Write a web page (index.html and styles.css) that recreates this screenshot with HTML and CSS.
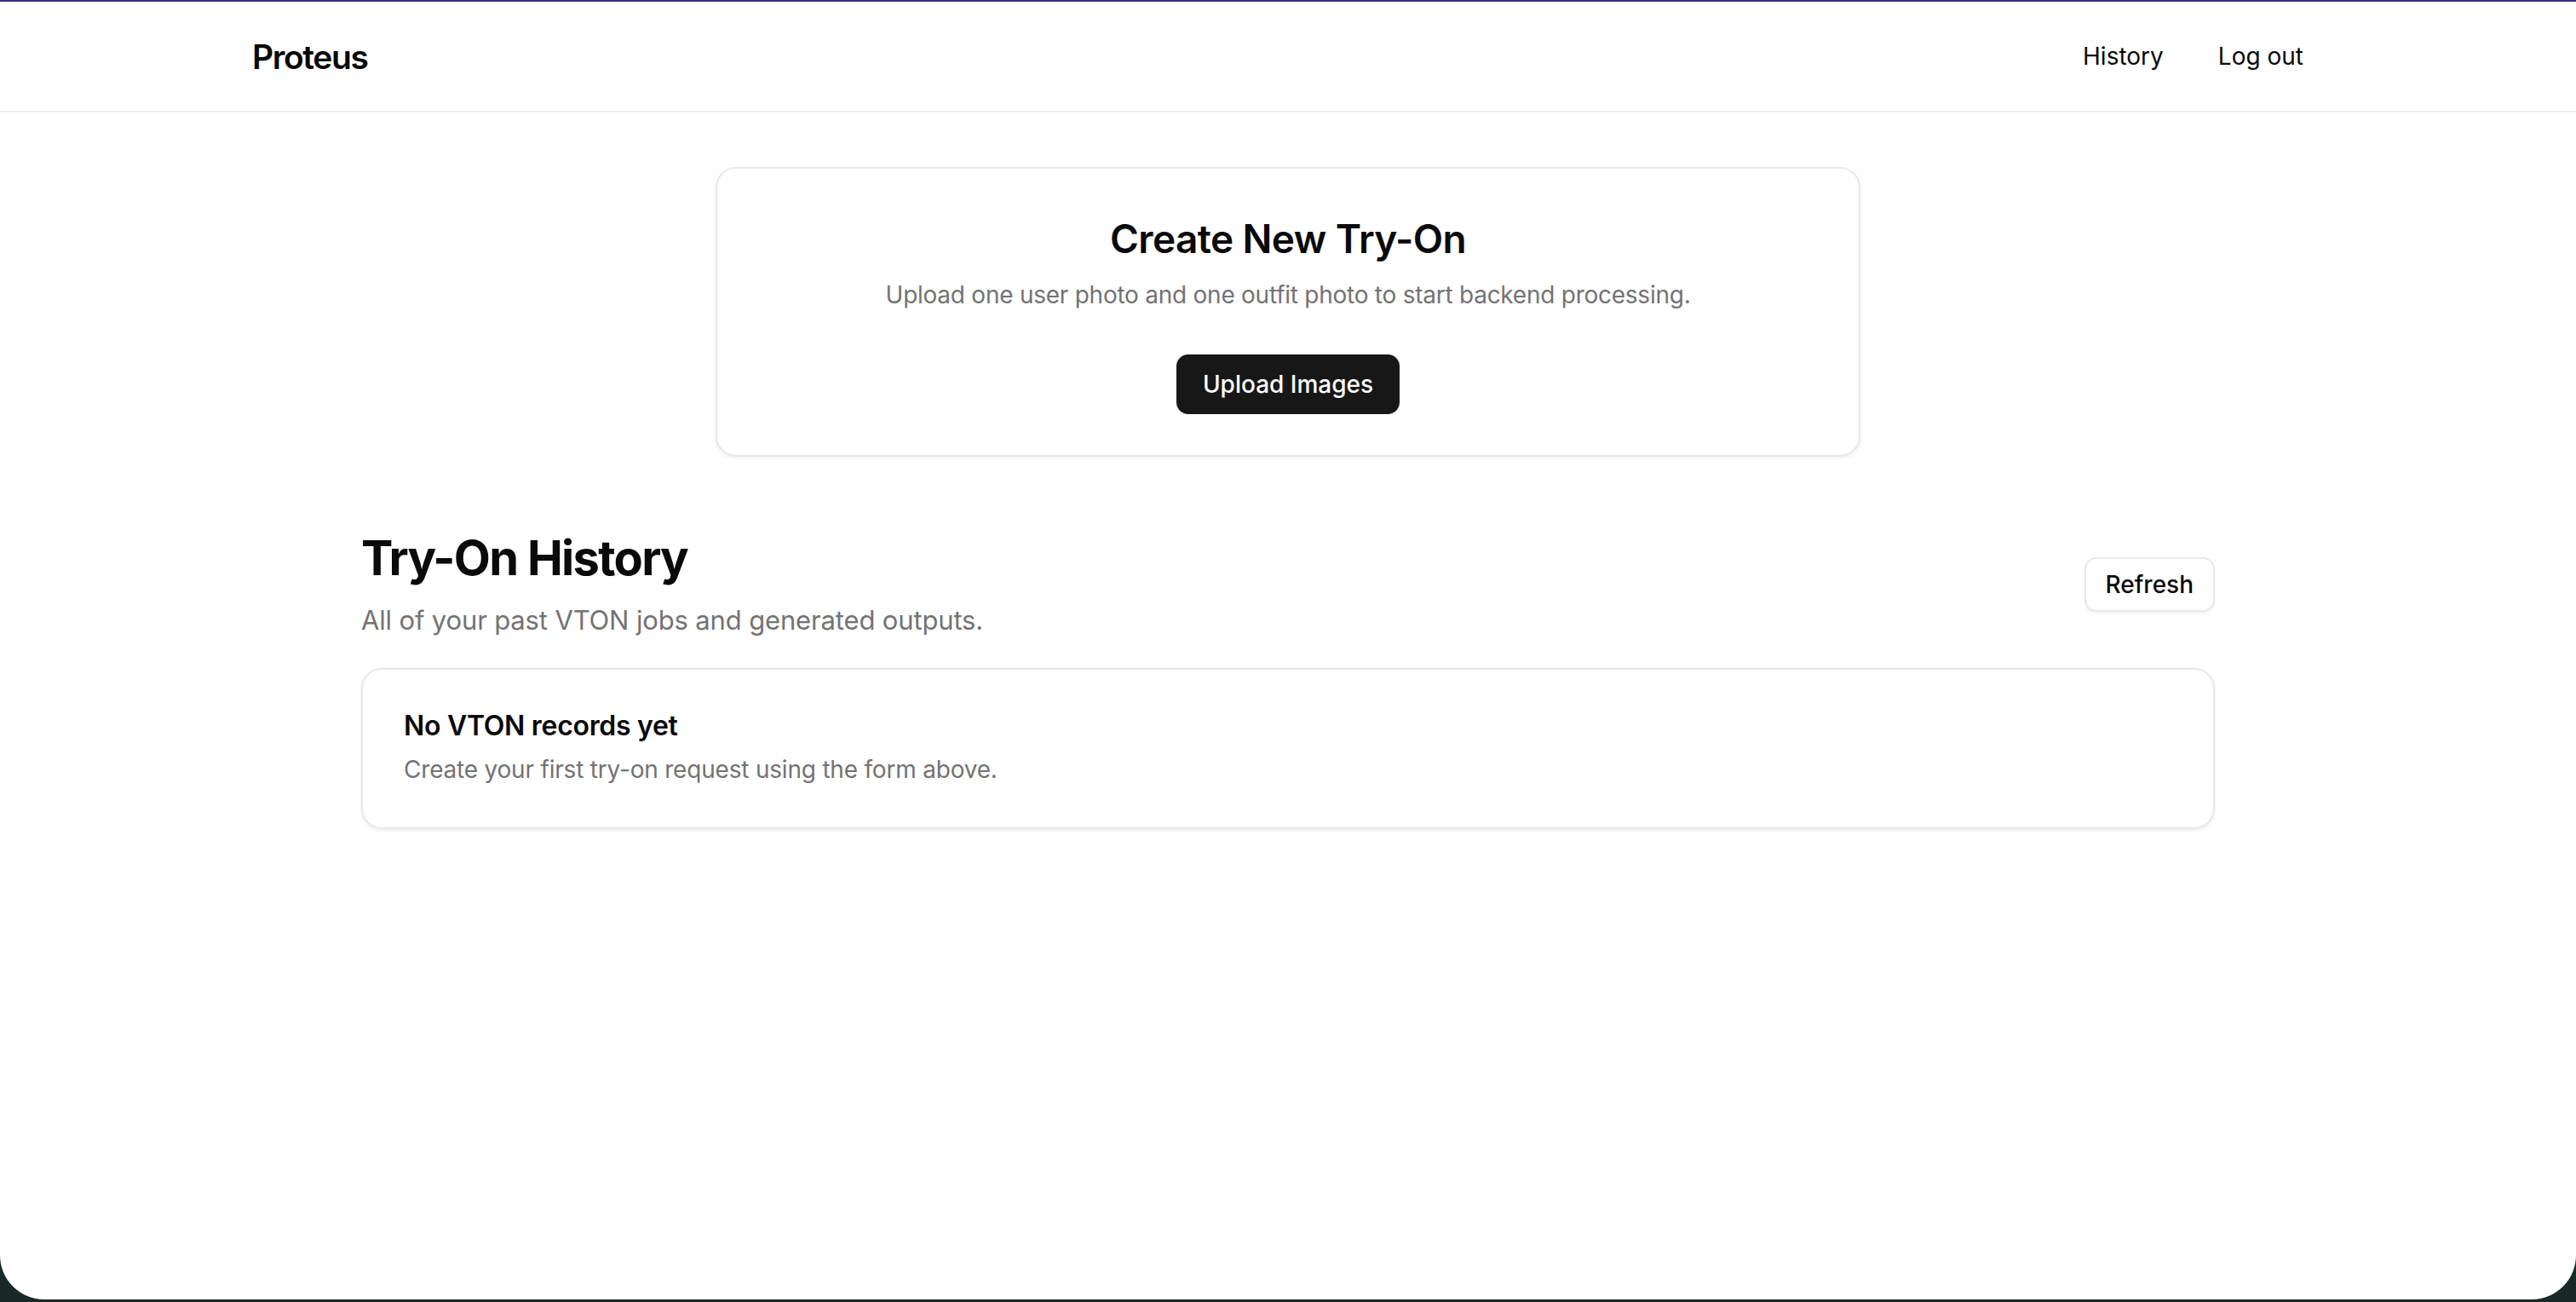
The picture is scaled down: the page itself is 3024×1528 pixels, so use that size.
FILE: index.html
```html
<!DOCTYPE html>
<html lang="en">
<head>
    <meta charset="UTF-8">
    <meta name="viewport" content="width=device-width, initial-scale=1.0">
    <title>Proteus</title>
    <link rel="stylesheet" href="styles.css">
</head>
<body>
    <div class="window">
        <header class="topbar">
            <div class="topbar-inner">
                <a class="logo" href="#">Proteus</a>
                <nav class="nav">
                    <a href="#">History</a>
                    <a href="#">Log out</a>
                </nav>
            </div>
        </header>

        <main class="main">
            <section class="card create">
                <h1 class="create-title">Create New Try-On</h1>
                <p class="create-text">Upload one user photo and one outfit photo to start backend processing.</p>
                <button class="btn-dark">Upload Images</button>
            </section>

            <section class="history">
                <div class="history-head">
                    <div>
                        <h2 class="history-title">Try-On History</h2>
                        <p class="history-text">All of your past VTON jobs and generated outputs.</p>
                    </div>
                    <button class="btn-light">Refresh</button>
                </div>
                <div class="card empty">
                    <h3 class="empty-title">No VTON records yet</h3>
                    <p class="empty-text">Create your first try-on request using the form above.</p>
                </div>
            </section>
        </main>
    </div>
</body>
</html>
```

FILE: styles.css
```css
* {
    box-sizing: border-box;
}
body {
    margin: 0;
    background-color: #1b2828;
    font-family: Inter, "Noto Sans", sans-serif;
    color: #0a0a0a;
}
.window {
    min-height: 1525px;
    background-color: #fff;
    border-top: 2px solid #3d2b78;
    border-radius: 0 0 52px 52px;
}
.topbar {
    border-bottom: 2px solid #f0f0f0;
}
.topbar-inner {
    max-width: 2560px;
    height: 128px;
    margin: 0 auto;
    padding: 0 64px;
    display: flex;
    align-items: center;
    justify-content: space-between;
}
.logo {
    font-size: 39px;
    font-weight: 600;
    letter-spacing: -1.4px;
    color: #0a0a0a;
    text-decoration: none;
}
.nav {
    display: flex;
    gap: 16px;
}
.nav a {
    padding: 12px 24px;
    font-size: 28px;
    color: #0a0a0a;
    text-decoration: none;
}
.main {
    padding-top: 64px;
}
.card {
    background-color: #fff;
    border: 2px solid #e8e8e8;
    border-radius: 24px;
    box-shadow: 0 2px 4px rgba(0, 0, 0, 0.06);
}
.create {
    width: 1344px;
    margin: 0 auto;
    padding: 50px 48px 48px;
    text-align: center;
}
.create-title {
    margin: 0;
    font-size: 46px;
    line-height: 64px;
    font-weight: 600;
    letter-spacing: -0.6px;
}
.create-text {
    margin: 14px 0 0;
    font-size: 28px;
    line-height: 40px;
    letter-spacing: -0.25px;
    color: #737373;
}
.btn-dark {
    margin-top: 50px;
    height: 70px;
    padding: 0 31px;
    border: none;
    border-radius: 14px;
    background-color: #171717;
    color: #fff;
    font-family: inherit;
    font-size: 28px;
    font-weight: 500;
    cursor: pointer;
}
.history {
    width: 2176px;
    margin: 84px auto 0;
}
.history-head {
    display: flex;
    align-items: center;
    justify-content: space-between;
}
.history-title {
    margin: 0;
    font-size: 56px;
    line-height: 70px;
    font-weight: 700;
    letter-spacing: -1.7px;
}
.history-text {
    margin: 14px 0 0;
    font-size: 31px;
    line-height: 48px;
    letter-spacing: -0.15px;
    color: #737373;
}
.btn-light {
    height: 64px;
    padding: 0 23px;
    border: 2px solid #e8e8e8;
    border-radius: 14px;
    background-color: #fff;
    color: #0a0a0a;
    font-family: inherit;
    font-size: 28px;
    font-weight: 500;
    box-shadow: 0 2px 3px rgba(0, 0, 0, 0.05);
    cursor: pointer;
}
.empty {
    margin-top: 32px;
    padding: 46px 48px 48px;
}
.empty-title {
    margin: 0;
    font-size: 32px;
    line-height: 40px;
    font-weight: 600;
    letter-spacing: -0.3px;
}
.empty-text {
    margin: 11px 0 0;
    font-size: 28px;
    line-height: 40px;
    letter-spacing: -0.2px;
    color: #737373;
}
```
